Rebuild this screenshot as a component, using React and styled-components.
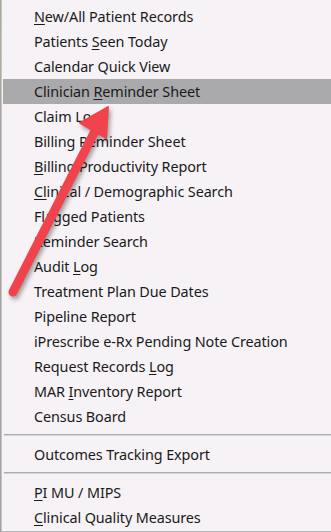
import React from "react";
import styled, { createGlobalStyle } from "styled-components";

const Global = createGlobalStyle`
  html, body { margin: 0; padding: 0; }
  body {
    background: linear-gradient(#9fb08a 0, #a9b29a 60px, #a2a2a2 140px, #a2a2a2 100%);
    width: 331px;
    height: 532px;
    overflow: hidden;
    font-family: "Noto Sans", "Open Sans", sans-serif;
  }
`;

const Stage = styled.div`
  position: relative;
  width: 331px;
  height: 532px;
`;

const Menu = styled.div`
  display: flex;
  flex-direction: column;
  margin-left: 1px;
  width: 330px;
  height: 532px;
  box-sizing: border-box;
  background: #f6f2f6;
  border-left: 1px solid #c6c4c6;
  border-bottom: 1px solid #b8b6b8;
  padding: 4px 0 1px 1px;
`;

const Item = styled.div`
  height: 25px;
  flex: 0 0 25px;
  box-sizing: border-box;
  display: flex;
  align-items: center;
  padding: 0 0 1px 31px;
  font-size: 14.4px;
  color: #1a1a1a;
  white-space: pre;
  letter-spacing: -0.1px;
  background: ${(p) => (p.$active ? "#aaa9ab" : "transparent")};
`;

const Label = styled.span`
  white-space: pre;
`;

const Key = styled.span`
  text-decoration: underline;
  text-decoration-thickness: 1px;
  text-underline-offset: 2px;
`;

const Separator = styled.div`
  flex: 0 0 13px;
  display: flex;
  align-items: flex-start;
  padding-top: 5px;
  box-sizing: border-box;
  &::before {
    content: "";
    display: block;
    width: 100%;
    margin-left: 1px;
    height: 1px;
    background: #aeadae;
    border-bottom: 1px solid #d6d4d6;
  }
`;

const Arrow = styled.svg`
  position: absolute;
  left: 0;
  top: 0;
  pointer-events: none;
  filter: drop-shadow(2px 3px 2px rgba(0, 0, 0, 0.35));
`;

const items = [
  [<><Key>N</Key>ew/All Patient Records</>],
  [<>Patients <Key>S</Key>een Today</>],
  [<>Calendar Quick View</>],
  [<>Clinician <Key>R</Key>eminder Sheet</>, true],
  [<>Claim Log</>],
  [<>Billing Reminder Sheet</>],
  [<><Key>B</Key>illing Productivity Report</>],
  [<><Key>Cl</Key>inical / Demographic Search</>],
  [<>Flagged Patients</>],
  [<>Reminder Search</>],
  [<>Audit <Key>L</Key>og</>],
  [<>Treatment Plan Due Dates</>],
  [<>Pipeline Report</>],
  [<>iPrescribe e-Rx Pending Note Creation</>],
  [<>Request Records <Key>L</Key>og</>],
  [<>MAR <Key>I</Key>nventory Report</>],
  [<>Census Board</>],
];

export default function App() {
  return (
    <Stage>
      <Global />
      <Menu>
        {items.map(([label, active], i) => (
          <Item key={i} $active={active}>
            <Label>{label}</Label>
          </Item>
        ))}
        <Separator />
        <Item>
          <Label>Outcomes Tracking Export</Label>
        </Item>
        <Separator />
        <Item>
          <Label>
            <Key>P</Key>I MU / MIPS
          </Label>
        </Item>
        <Item>
          <Label>
            <Key>C</Key>linical Quality Measures
          </Label>
        </Item>
      </Menu>
      <Arrow width="331" height="532" viewBox="0 0 331 532">
        <line
          x1="13"
          y1="292"
          x2="94"
          y2="133"
          stroke="#f0434b"
          strokeWidth="9"
          strokeLinecap="round"
        />
        <polygon
          points="108,107 80,123 106,138"
          fill="#f0434b"
          strokeLinejoin="round"
          stroke="#f0434b"
          strokeWidth="2"
        />
      </Arrow>
    </Stage>
  );
}
